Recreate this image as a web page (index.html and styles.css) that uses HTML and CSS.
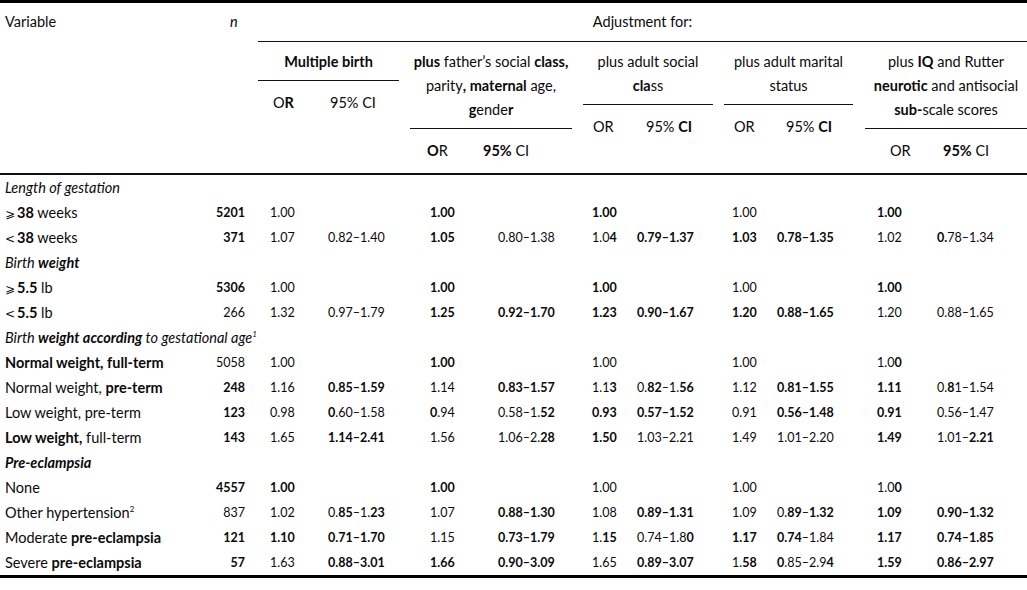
FILE: index.html
```html
<!DOCTYPE html>
<html lang="en">
<head>
<meta charset="utf-8">
<title>Adjusted odds ratios</title>
<link rel="stylesheet" href="styles.css">
</head>
<body>
<div class="table">
  <div class="thead">
    <div class="h-var">Variable</div>
    <div class="h-n"><i>n</i></div>
    <div class="h-adj">
      <div class="adj-title">Adjustment for:</div>
      <div class="groups">
        <div class="grp g1">
          <div class="gt"><b>Multiple birth</b></div>
          <div class="sub s1"><span class="or">O<b>R</b></span><span>95% CI</span></div>
        </div>
        <div class="grp g2">
          <div class="gt"><b>plus</b> father’s social <b>class,</b><br>parity<b>, maternal</b> age,<br><b>g</b>ende<b>r</b></div>
          <div class="sub s2"><span class="or"><b>O</b>R</span><span><b>95%</b> CI</span></div>
        </div>
        <div class="grp g3">
          <div class="gt">plus adult social<br><b>cla</b>ss</div>
          <div class="sub s3"><span class="or">OR</span><span>95% <b>CI</b></span></div>
        </div>
        <div class="grp g4">
          <div class="gt">plus adult marital<br>status</div>
          <div class="sub s4"><span class="or">OR</span><span>95% <b>CI</b></span></div>
        </div>
        <div class="grp g5">
          <div class="gt">plus <b>IQ</b> and Rutter<br><b>neurotic</b> and antisocial<br><b>sub-</b>scale scores</div>
          <div class="sub s5"><span class="or">OR</span><span><b>95%</b> CI</span></div>
        </div>
      </div>
    </div>
  </div>

  <div class="tbody">
    <div class="row cat"><i>Length of gestation</i></div>
    <div class="row">
      <span class="lab"><span class="rel">⩾</span><b>38</b> weeks</span><b class="n">5201</b>
      <span>1.00</span><span></span>
      <b>1.00</b><span></span>
      <b>1.00</b><span></span>
      <span>1.00</span><span></span>
      <b>1.00</b><span></span>
    </div>
    <div class="row">
      <span class="lab"><span class="rel">&lt;</span><b>38</b> weeks</span><b class="n">371</b>
      <span>1.07</span><span>0.82–1.40</span>
      <b>1.05</b><span>0.80–1.38</span>
      <span>1.0<b>4</b></span><b>0.79–1.37</b>
      <b>1.03</b><b>0.78–1.35</b>
      <span>1.02</span><span><b>0.</b>78–1.34</span>
    </div>
    <div class="row cat"><i>Birth <b>we</b>i<b>ght</b></i></div>
    <div class="row">
      <span class="lab"><span class="rel">⩾</span><b>5.5</b> lb</span><b class="n">5306</b>
      <span>1.00</span><span></span>
      <b>1.00</b><span></span>
      <b>1.00</b><span></span>
      <span>1.00</span><span></span>
      <b>1.00</b><span></span>
    </div>
    <div class="row">
      <span class="lab"><span class="rel">&lt;</span><b>5.5</b> lb</span><span class="n">266</span>
      <span>1.32</span><span>0.97–1.79</span>
      <b>1.25</b><b>0.92–1.70</b>
      <b>1.23</b><b>0.90–1.67</b>
      <b>1.20</b><b>0.88–1.65</b>
      <span>1.20</span><span>0.88–1.65</span>
    </div>
    <div class="row cat"><i>Birth <b>weight according</b> to gestational age<sup>1</sup></i></div>
    <div class="row">
      <b class="lab">Normal weight, full-term</b><span class="n">5058</span>
      <span>1.00</span><span></span>
      <b>1.00</b><span></span>
      <span>1.00</span><span></span>
      <span>1.00</span><span></span>
      <span>1.0<b>0</b></span><span></span>
    </div>
    <div class="row">
      <span class="lab">Normal weight, <b>pre-term</b></span><b class="n">248</b>
      <span>1.16</span><b>0.85–1.59</b>
      <span>1.14</span><b>0.83–1.57</b>
      <span>1.1<b>3</b></span><span>0.<b>82</b>–1.<b>56</b></span>
      <span>1.12</span><b>0.81–1.55</b>
      <b>1.11</b><span>0.<b>8</b>1–1.54</span>
    </div>
    <div class="row">
      <span class="lab">Low weight, pre-term</span><b class="n">123</b>
      <span>0.98</span><span><b>0</b>.60–1.58</span>
      <span><b>0</b>.94</span><span>0.58–1.<b>52</b></span>
      <b>0.93</b><b>0.57–1.52</b>
      <span>0.91</span><b>0.56–1.48</b>
      <b>0.91</b><span>0.56–1.47</span>
    </div>
    <div class="row">
      <span class="lab"><b>Low weight,</b> full-term</span><b class="n">143</b>
      <span>1.65</span><b>1.14–2.41</b>
      <span>1.56</span><span>1.06–2.<b>28</b></span>
      <b>1.50</b><span>1.03–2.21</span>
      <span>1.49</span><span>1.01–2.20</span>
      <b>1.49</b><span>1.01–<b>2.21</b></span>
    </div>
    <div class="row cat"><i><b>Pre-eclampsia</b></i></div>
    <div class="row">
      <span class="lab">None</span><b class="n">4557</b>
      <b>1.00</b><span></span>
      <b>1.00</b><span></span>
      <span>1.00</span><span></span>
      <span>1.00</span><span></span>
      <span>1.0<b>0</b></span><span></span>
    </div>
    <div class="row">
      <span class="lab">Other hypertension<sup>2</sup></span><span class="n">837</span>
      <span>1.02</span><span>0.<b>85</b>–1.<b>23</b></span>
      <span>1.07</span><b>0.88–1.30</b>
      <span>1.08</span><b>0.89–1.31</b>
      <span>1.09</span><span>0.<b>89</b>–<b>1.32</b></span>
      <b>1.09</b><b>0.90–1.32</b>
    </div>
    <div class="row">
      <span class="lab">Moderate <b>pre-eclampsia</b></span><b class="n">121</b>
      <b>1.10</b><b>0.71–1.70</b>
      <span>1.15</span><b>0.73–1.79</b>
      <span>1.<b>15</b></span><span>0.74–1.8<b>0</b></span>
      <b>1.17</b><span><b>0.74</b>–1.84</span>
      <b>1.17</b><b>0.74–1.85</b>
    </div>
    <div class="row">
      <span class="lab">Severe <b>pre-eclampsia</b></span><b class="n">57</b>
      <span>1.63</span><b>0.88–3.01</b>
      <b>1.66</b><b>0.90–3.09</b>
      <span>1.65</span><b>0.89–3.07</b>
      <span>1.<b>58</b></span><span><b>0</b>.85–2.9<b>4</b></span>
      <b>1.59</b><b>0.86–2.97</b>
    </div>
  </div>
</div>
</body>
</html>
```
FILE: styles.css
```css
html, body {
  margin: 0;
  padding: 0;
  background: #fff;
}
body {
  font-family: "Lato", "Liberation Sans", sans-serif;
  font-size: 14.5px;
  color: #0a0a0a;
}
b { font-weight: 700; }
sup {
  font-size: 8px;
  line-height: 0;
  vertical-align: 6px;
}
.table {
  width: 1027px;
}
.thead {
  display: flex;
  border-top: 3px solid #000;
  border-bottom: 2px solid #111;
}
.h-var {
  width: 225px;
  padding-left: 5px;
  box-sizing: border-box;
  line-height: 38px;
}
.h-n {
  width: 33px;
  padding-left: 5px;
  box-sizing: border-box;
  line-height: 38px;
}
.h-adj {
  flex: 1;
}
.adj-title {
  height: 38px;
  line-height: 38px;
  text-align: center;
  border-bottom: 1px solid #111;
}
.groups {
  display: flex;
}
.grp {
  display: flex;
  flex-direction: column;
}
.g1 { width: 141px; margin-right: 11px; }
.g2 { width: 162px; margin-right: 11px; }
.g3 { width: 130px; margin-right: 11px; }
.g4 { width: 129px; margin-right: 12px; }
.g5 { width: 162px; }
.gt {
  padding: 8px 0 6px;
  line-height: 24px;
  text-align: center;
  border-bottom: 1px solid #111;
  white-space: nowrap;
}
.sub {
  display: flex;
  padding: 10px 0 10px;
  line-height: 24px;
}
.s1 { padding-left: 15px; }
.s1 .or { width: 57px; }
.s2 { padding-left: 17px; }
.s2 .or { width: 56px; }
.s3 { padding-left: 10px; }
.s3 .or { width: 53px; }
.s4 { padding-left: 10px; }
.s4 .or { width: 52px; }
.s5 { padding-left: 25px; }
.s5 .or { width: 53px; }

.tbody {
  border-bottom: 3px solid #000;
}
.row {
  display: grid;
  grid-template-columns: 185px 85px 58px 102px 68px 94px 45px 95px 45px 100px 60px 90px;
  height: 25px;
  align-items: center;
  white-space: nowrap;
  font-size: 12.5px;
}
.row .lab {
  padding-left: 5px;
  font-size: 14.5px;
}
.rel {
  font-family: "DejaVu Sans", sans-serif;
  font-weight: 400;
  font-size: 12px;
  margin-right: 2px;
}
.row .n {
  text-align: right;
  padding-right: 25px;
}
.row.cat {
  display: block;
  line-height: 25px;
  padding-left: 5px;
  font-size: 14.5px;
}
```
